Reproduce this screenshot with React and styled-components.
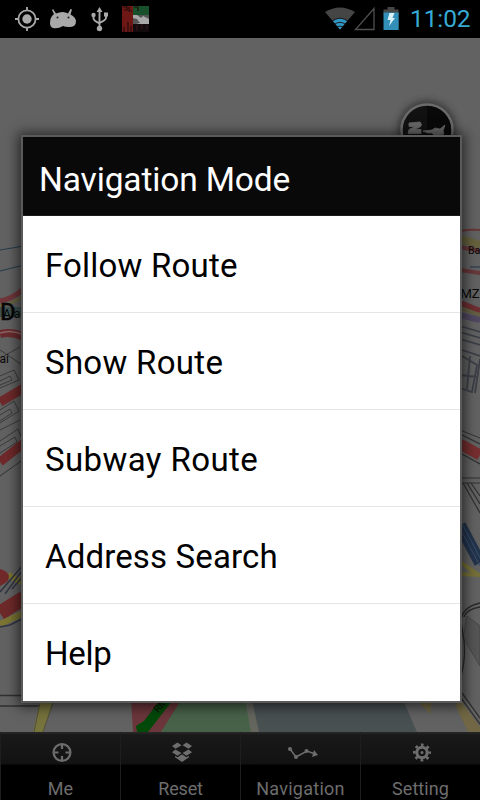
import React from 'react';
import styled, { createGlobalStyle } from 'styled-components';

const GlobalStyle = createGlobalStyle`
  * {
    box-sizing: border-box;
  }

  body {
    margin: 0;
    background: #000;
    font-family: Roboto, 'Noto Sans', sans-serif;
  }
`;

const Screen = styled.div`
  position: relative;
  display: flex;
  flex-direction: column;
  width: 480px;
  height: 800px;
  overflow: hidden;
  background: #626262;
`;

const StatusBar = styled.header`
  display: flex;
  justify-content: space-between;
  flex: 0 0 38px;
  background: #000;
`;

const StatusIcons = styled.svg`
  display: block;
  height: 38px;
  width: ${(props) => props.$width}px;
`;

const StatusRight = styled.div`
  display: flex;
  width: 160px;
`;

const Clock = styled.span`
  color: #36a9d4;
  font-size: 24.5px;
  line-height: 38px;
  letter-spacing: -0.1px;
  white-space: nowrap;
`;

const MapArea = styled.main`
  flex: 0 0 694px;

  svg {
    display: block;
  }
`;

const TabBar = styled.nav`
  display: grid;
  grid-template-columns: repeat(4, 1fr);
  flex: 0 0 68px;
  background: linear-gradient(#292929 0, #191919 3px, #121212 32px, #000 33px);
`;

const Tab = styled.div`
  display: flex;
  flex-direction: column;
  align-items: center;
  border-left: 1px solid #1e1e1e;
  color: #6d6d6d;

  svg {
    display: block;
    margin: 7px 0 0 3px;
  }
`;

const TabLabel = styled.span`
  margin-top: 14px;
  font-size: 18px;
  line-height: 23px;
  letter-spacing: ${(props) => props.$spacing || 0}px;
`;

const Dialog = styled.section`
  position: absolute;
  top: 135px;
  left: 21px;
  width: 441px;
  height: 568px;
  border: 2px solid #5a5a5a;
  background: #fff;
  box-shadow: 0 1px 12px 3px rgba(0, 0, 0, 0.6);
`;

const DialogTitle = styled.h1`
  height: 79px;
  margin: 0;
  padding: 3px 0 0 16px;
  border-bottom: 1px solid #1c1c1c;
  background: #090909;
  color: #fff;
  font-size: 33.5px;
  font-weight: 400;
  line-height: 80px;
  letter-spacing: ${(props) => props.$spacing}px;
  white-space: nowrap;
`;

const List = styled.ul`
  margin: 0;
  padding: 0;
  list-style: none;
`;

const Item = styled.li`
  height: 97px;
  padding: 2px 0 0 22px;
  border-bottom: 1px solid #e6e6e6;
  color: #000;
  font-size: 33px;
  line-height: 96px;
  letter-spacing: ${(props) => props.$spacing}px;

  &:last-child {
    border-bottom: 0;
  }
`;

const items = [
  { name: 'Follow Route', spacing: 0.2 },
  { name: 'Show Route', spacing: 0.3 },
  { name: 'Subway Route', spacing: 0.4 },
  { name: 'Address Search', spacing: 0.15 },
  { name: 'Help', spacing: -0.3 },
];

const NotificationIcons = () => (
  <StatusIcons $width={160} viewBox="0 0 160 38">
    <circle cx="27" cy="19" r="8.6" fill="none" stroke="#a9a9a9" strokeWidth="1.8" />
    <circle cx="27" cy="19" r="4.7" fill="#a9a9a9" />
    <path d="M27 7v4M27 27v4M15 19h4M35 19h4" stroke="#a9a9a9" strokeWidth="1.8" />
    <path
      d="M53 9l3 4.500q7-3 12 0l2.500-4.500 1.500.5-1.500 5q5.500 3 5.500 7 0 5.500-7 5.500-4 0-6-1-5 3-10 2-3-1-3-5 0-6 4-9l-2-4z"
      fill="#a9a9a9"
    />
    <circle cx="57.500" cy="17.500" r="1" fill="#222" />
    <circle cx="68.500" cy="17.500" r="1" fill="#222" />
    <path
      d="M99.500 11v17M93.500 15v3.500q0 2 6 5M106 14v4q0 2-6.500 5"
      stroke="#a9a9a9"
      strokeWidth="1.900"
      fill="none"
    />
    <path d="M99.500 7l3 5h-6zM104 12.500h4v4h-4z" fill="#a9a9a9" />
    <circle cx="93.500" cy="15" r="2.200" fill="#a9a9a9" />
    <circle cx="99.500" cy="28.500" r="2.700" fill="#a9a9a9" />
    <path d="M122 6h11v26h-11z" fill="#6f1715" />
    <path d="M133 6h16v9h-16z" fill="#17502b" />
    <path d="M133 15h16v9h-16z" fill="#a9a9a9" />
    <path d="M133 24h16v8h-16z" fill="#120a0c" />
    <path d="M133 15h4l4 3 2-2 6 3v-4h-16zM133 18l4 1 3 4-4 1h-3z" fill="#555" />
    <path
      d="M123 7h4v3h-3M129 7v4h3M134 7h4v4M128 22v10M131 26v6M124 27v5"
      fill="none"
      stroke="#210c0d"
      strokeWidth="1.200"
    />
    <path d="M137 25v6M142 24v5M147 25v4" stroke="#37151b" />
  </StatusIcons>
);

const SignalIcons = () => (
  <StatusIcons $width={90} viewBox="320 0 90 38">
    <path d="M340 29.500L325 12q15-9 30 0z" fill="#454545" />
    <path d="M340 29.500l-7-8.500q7-5 14 0z" fill="#3196c2" />
    <path
      d="M332 21q8-5.500 16 0M334.500 24.200q5.500-3.700 11 0M337 27q3-2 6 0"
      fill="none"
      stroke="#111e25"
      strokeWidth="1"
    />
    <path d="M355.500 29.500h18.500V8.500z" fill="none" stroke="#4f4f4f" strokeWidth="1.300" />
    <path d="M383.500 9.500h4V7h7v2.500h4V14h-15z" fill="#464646" />
    <path d="M383.500 12.500h15.200V30h-15.200z" fill="#318fb8" />
    <path d="M389.500 13h5l-2 5h2.500l-6 8 1.500-6h-3z" fill="#d9f2fa" />
  </StatusIcons>
);

const CityMap = () => (
  <svg width="480" height="694" viewBox="0 38 480 694">
    <defs>
      <filter id="soft" x="-30%" y="-30%" width="160%" height="160%">
        <feGaussianBlur stdDeviation="3" />
      </filter>
    </defs>
    <rect y="38" width="480" height="694" fill="#626262" />

    {/* left side */}
    <g fill="none">
      <path d="M0 250l24-4M0 271l24-6" stroke="#263d4c" strokeWidth="1.200" />
      <path d="M0 301q12-2 24-12" stroke="#70363a" strokeWidth="5" />
      <path d="M0 306q12-2 24-10" stroke="#6a6540" strokeWidth="3" />
      <path d="M0 312h24" stroke="#3d5351" strokeWidth="10" />
      <path d="M0 334q12-3 24 3" stroke="#692b2d" strokeWidth="8" />
      <path d="M0 333q12-4 24 2" stroke="#8a6464" strokeWidth="1.500" />
      <path
        d="M0 350l24 16M0 376l14-6 5 10-19 8M0 381l10-5 2 4-12 5M0 410l14-9 5 10-19 12M0 415l10-6 2 4-12 8M0 441l18-12 5 12M0 446l15-9 2 5-17 11M4 356l16-9M0 430l20-10"
        stroke="#3b3b3b"
        strokeWidth="1"
      />
      <path d="M0 402l24-14M0 462l24-19" stroke="#6f292a" strokeWidth="9" />
      <path d="M0 476l24-17" stroke="#333" />
      <path d="M0 613l24-15" stroke="#6e2929" strokeWidth="15" />
      <path d="M0 624l24-11M8 575l16 8" stroke="#7b7432" strokeWidth="6" />
      <path d="M0 627l10-2 14-7M0 592l24-28M5 594l19-26M12 589l12-14" stroke="#313542" strokeWidth="1.500" />
      <path d="M0 569q13 4 7 13l-7 4z" fill="#722929" />
      <path d="M0 695.500h24M0 706h52" stroke="#313131" strokeWidth="1.500" />
    </g>
    <text x="0" y="320" fontSize="24" fill="#080808" stroke="#080808" strokeWidth="0.500">D</text>
    <text x="3" y="318" fontSize="12" fill="#050505">Alan</text>
    <text x="-0.500" y="362.500" fontSize="12" fill="#080808">ai</text>

    {/* right side */}
    <g fill="none">
      <path d="M460 231q12-2 20-1" stroke="#683636" strokeWidth="2" />
      <path d="M460 239l20 6" stroke="#66613d" strokeWidth="8" />
      <path d="M460 247l20 4M460 270l20 3" stroke="#68383a" strokeWidth="4" />
      <path d="M470 267h10" stroke="#414955" strokeWidth="2" />
      <path d="M460 303l20 8" stroke="#6d2e31" strokeWidth="6" />
      <path d="M460 308l20 7" stroke="#645e43" strokeWidth="4" />
      <path d="M460 315l20 5" stroke="#504760" strokeWidth="6" />
      <path
        d="M460 326l20 6M460 332l20 6M460 339l20 6M462 350l18 6M462 356l15 9-5 27-12-4M470 356l-3 33M460 375l18 2M475 393l5-34"
        stroke="#3c3f47"
        strokeWidth="1.800"
      />
      <path d="M460 430l20 8" stroke="#343434" />
      <path d="M460 444l20 11" stroke="#762e2f" strokeWidth="11" />
      <path
        d="M460 434l20 10M460 453l20 11M460 478h20M460 483h20M463 483l17 30M467 483l13 21M471 483l9 13"
        stroke="#303030"
        strokeWidth="1.200"
      />
      <path d="M460 525l20 38" stroke="#24344b" strokeWidth="12" />
      <path d="M460 520l20 38M460 528l20 38" stroke="#384f6e" strokeWidth="1" />
      <path d="M460 562l20 14M460 574l20 1" stroke="#757037" strokeWidth="4" />
      <path d="M467 616l13 10v40q-12-20-17-28z" fill="#555" stroke="#484848" />
      <path d="M480 603q-18 4-19 18l3 20q2 20-4 38M480 607q-13 2-16 10" stroke="#292929" strokeWidth="1.300" />
    </g>
    <text x="468" y="254" fontSize="10.500" fill="#080808">Ba</text>
    <text x="460.500" y="298" fontSize="13" fill="#080808">MZ</text>

    {/* bottom strip */}
    <path d="M40 700h13l-10 32h-10z" fill="#77733d" />
    <path d="M40 703l-6 29M53 703l-10 29" stroke="#515037" />
    <path d="M131 700h53l-23 32h-28z" fill="#6b363b" />
    <path d="M160 700h13l-25 32h-11l-1-6 8-5z" fill="#034909" />
    <path d="M181 700h70l7 32h-97z" fill="#486249" />
    <path d="M245 700h11l5 32h-10z" fill="#64665d" />
    <path d="M252 700h151l14 32H259z" fill="#485052" />
    <path d="M418 701h14l-2 13zM453 700h7l20 27v5h-12z" fill="#716744" />
    <path d="M461 698l19 26M462 693l18 25" fill="none" stroke="#303030" strokeWidth="1.300" />
    <text x="158" y="713" fontSize="10" fill="#071107" transform="rotate(-48 158 713)">RM8</text>

    {/* compass */}
    <circle cx="427" cy="130" r="30" fill="#2e2e2e" opacity="0.7" filter="url(#soft)" />
    <circle cx="427" cy="130" r="25.500" fill="#111" stroke="#6a6a6a" strokeWidth="2.500" />
    <path d="M427 106a24 24 0 0 1 0 48z" fill="#090909" />
    <path
      d="M409 123l11-1q3 3 0 5l-5 2 6 .5v4h-13l1-4 6-3h-6zM423 131l9-1 3-2 5 1 5-4-2 6 1 3-4 1h-6l-2-2h-4z"
      fill="#686868"
      stroke="#686868"
      strokeWidth="0.800"
    />
  </svg>
);

const MeIcon = () => (
  <svg width="24" height="24" viewBox="0 0 24 24" fill="none" stroke="currentColor">
    <circle cx="12" cy="13.500" r="8.400" strokeWidth="2.300" />
    <path d="M12 6v4M12 17v4M4.500 13.500h4M15.500 13.500h4" strokeWidth="2.200" />
  </svg>
);

const ResetIcon = () => (
  <svg width="24" height="24" viewBox="0 0 24 24" fill="currentColor">
    <path d="M7.500 3.500l4 2.700-6 3.600-3.500-2.700zM16.500 3.500l-4 2.700 6 3.600L22 7.100zM5.500 10.500l6 3.600-4 2.700L2 13.300zM18.500 10.500l-6 3.600 4 2.700 5.500-3.500zM12 15.300l4.500 3 2.500-1.500v1.500L12 23l-7-4.700v-1.500L7.500 18.300z" />
  </svg>
);

const RouteIcon = () => (
  <svg width="34" height="24" viewBox="0 0 34 24" fill="currentColor">
    <path d="M5 10l6 8 11-6 8 3" fill="none" stroke="currentColor" strokeWidth="1.500" />
    <circle cx="5" cy="10" r="2" />
    <circle cx="11" cy="18" r="2" />
    <circle cx="21.500" cy="12" r="2" />
    <path d="M29 11l4 5-6 2z" />
  </svg>
);

const SettingIcon = () => (
  <svg width="24" height="24" viewBox="0 0 24 24" fill="none" stroke="currentColor">
    <circle cx="12" cy="13.500" r="5.200" strokeWidth="3" />
    <circle
      cx="12"
      cy="13.500"
      r="7.600"
      strokeWidth="2.800"
      strokeDasharray="2.700 3.269"
      strokeDashoffset="1.350"
    />
    <circle cx="12" cy="13.500" r="1.500" fill="currentColor" stroke="none" />
  </svg>
);

const tabs = [
  { name: 'Me', icon: <MeIcon />, spacing: 0 },
  { name: 'Reset', icon: <ResetIcon />, spacing: -0.2 },
  { name: 'Navigation', icon: <RouteIcon />, spacing: 0.25 },
  { name: 'Setting', icon: <SettingIcon />, spacing: 0.05 },
];

const App = () => {
  return (
    <Screen>
      <GlobalStyle />
      <StatusBar>
        <NotificationIcons />
        <StatusRight>
          <SignalIcons />
          <Clock>11:02</Clock>
        </StatusRight>
      </StatusBar>
      <MapArea>
        <CityMap />
      </MapArea>
      <TabBar>
        {tabs.map((tab) => (
          <Tab key={tab.name}>
            {tab.icon}
            <TabLabel $spacing={tab.spacing}>{tab.name}</TabLabel>
          </Tab>
        ))}
      </TabBar>
      <Dialog>
        <DialogTitle $spacing={-0.15}>Navigation Mode</DialogTitle>
        <List>
          {items.map((item) => (
            <Item key={item.name} $spacing={item.spacing}>
              {item.name}
            </Item>
          ))}
        </List>
      </Dialog>
    </Screen>
  );
};

export default App;
